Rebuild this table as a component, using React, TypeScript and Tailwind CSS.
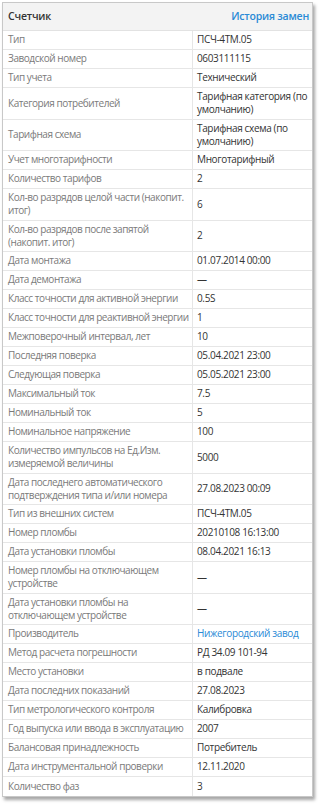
import React from 'react';

type Row = { label: string; value: string; link?: boolean };

const rows: Row[] = [
  { label: 'Тип', value: 'ПСЧ-4ТМ.05' },
  { label: 'Заводской номер', value: '0603111115' },
  { label: 'Тип учета', value: 'Технический' },
  { label: 'Категория потребителей', value: 'Тарифная категория (по умолчанию)' },
  { label: 'Тарифная схема', value: 'Тарифная схема (по умолчанию)' },
  { label: 'Учет многотарифности', value: 'Многотарифный' },
  { label: 'Количество тарифов', value: '2' },
  { label: 'Кол-во разрядов целой части (накопит. итог)', value: '6' },
  { label: 'Кол-во разрядов после запятой (накопит. итог)', value: '2' },
  { label: 'Дата монтажа', value: '01.07.2014 00:00' },
  { label: 'Дата демонтажа', value: '—' },
  { label: 'Класс точности для активной энергии', value: '0.5S' },
  { label: 'Класс точности для реактивной энергии', value: '1' },
  { label: 'Межповерочный интервал, лет', value: '10' },
  { label: 'Последняя поверка', value: '05.04.2021 23:00' },
  { label: 'Следующая поверка', value: '05.05.2021 23:00' },
  { label: 'Максимальный ток', value: '7.5' },
  { label: 'Номинальный ток', value: '5' },
  { label: 'Номинальное напряжение', value: '100' },
  { label: 'Количество импульсов на Ед.Изм. измеряемой величины', value: '5000' },
  { label: 'Дата последнего автоматического подтверждения типа и/или номера', value: '27.08.2023 00:09' },
  { label: 'Тип из внешних систем', value: 'ПСЧ-4ТМ.05' },
  { label: 'Номер пломбы', value: '20210108 16:13:00' },
  { label: 'Дата установки пломбы', value: '08.04.2021 16:13' },
  { label: 'Номер пломбы на отключающем устройстве', value: '—' },
  { label: 'Дата установки пломбы на отключающем устройстве', value: '—' },
  { label: 'Производитель', value: 'Нижегородский завод', link: true },
  { label: 'Метод расчета погрешности', value: 'РД 34.09 101-94' },
  { label: 'Место установки', value: 'в подвале' },
  { label: 'Дата последних показаний', value: '27.08.2023' },
  { label: 'Тип метрологического контроля', value: 'Калибровка' },
  { label: 'Год выпуска или ввода в эксплуатацию', value: '2007' },
  { label: 'Балансовая принадлежность', value: 'Потребитель' },
  { label: 'Дата инструментальной проверки', value: '12.11.2020' },
  { label: 'Количество фаз', value: '3' },
];

const App = () => {
  return (
    <div className="min-h-screen bg-white pt-[2px] pl-[2px]" style={{ fontFamily: '"Open Sans", "Noto Sans", sans-serif' }}>
      <div className="w-[311px] border border-[#c8c8c8] bg-white shadow-[2px_3px_3px_rgba(0,0,0,0.35)]">
        <div className="flex h-[28px] items-center justify-between border-b border-[#e2e2e2] bg-[#f3f3f3] pl-[5px] pr-[3px] text-[10.5px] tracking-[-0.2px]">
          <span className="font-semibold text-[#333]">Счетчик</span>
          <a className="font-semibold text-[#2a8ad6]">История замен</a>
        </div>
        {rows.map((r) => (
          <div key={r.label} className="grid min-h-[19px] grid-cols-[190px_1fr] border-b border-[#e6e6e6] last:border-b-0 text-[10px] leading-[13.25px] tracking-[-0.35px]">
            <div className="flex items-center border-r border-[#e6e6e6] pl-[5px] pr-0 py-[2px] text-[#7a7a7a] tracking-[-0.45px]">
              {r.label}
            </div>
            <div className={`flex items-center pl-[4px] pr-[2px] py-[2px] ${r.link ? 'text-[#2a8ad6]' : 'text-[#333]'}`}>
              {r.value}
            </div>
          </div>
        ))}
      </div>
    </div>
  );
};

export default App;
